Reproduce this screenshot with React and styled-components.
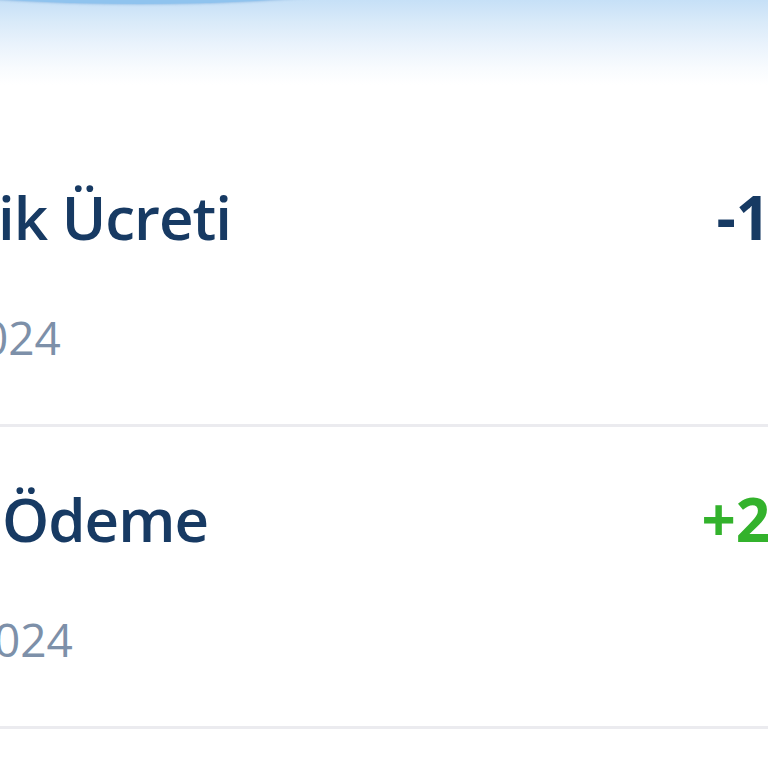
import React from 'react';
import styled, { createGlobalStyle } from 'styled-components';

const GlobalStyle = createGlobalStyle`
  html, body {
    margin: 0;
    padding: 0;
    background: #ffffff;
    overflow: hidden;
  }
  body {
    font-family: "Open Sans", "Noto Sans", sans-serif;
  }
`;

const Screen = styled.div`
  width: 770px;
  height: 768px;
  display: flex;
  flex-direction: column;
`;

const Header = styled.div`
  position: relative;
  height: 125px;
  flex-shrink: 0;
  overflow: hidden;
  background: linear-gradient(
    to bottom,
    #c6e0f7 0px,
    #d9eaf9 22px,
    #eaf3fc 45px,
    #f8fbfe 68px,
    #ffffff 85px
  );
`;

const Bubble = styled.div`
  position: absolute;
  left: -160px;
  top: -76px;
  width: 600px;
  height: 80px;
  border-radius: 50%;
  background: #8fc3ee;
  box-shadow: 0 1px 2px rgba(90, 150, 210, 0.35);
`;

const List = styled.div`
  display: flex;
  flex-direction: column;
`;

const Row = styled.div`
  display: flex;
  justify-content: space-between;
  align-items: flex-start;
  padding: 56px 0 59px;
  border-bottom: 3px solid #ebebef;
`;

const Info = styled.div`
  display: flex;
  flex-direction: column;
  gap: 56px;
  min-width: 0;
`;

const Title = styled.div`
  margin-left: ${({ $shift }) => $shift}px;
  font-size: 60px;
  line-height: 72px;
  font-weight: 600;
  letter-spacing: -1px;
  color: #173a63;
  white-space: nowrap;
`;

const DateText = styled.div`
  margin-left: ${({ $shift }) => $shift}px;
  font-size: 46px;
  line-height: 56px;
  font-weight: 500;
  color: #7d90a9;
  white-space: nowrap;
`;

const Amount = styled.div`
  font-size: 60px;
  line-height: 72px;
  font-weight: 700;
  color: ${({ $positive }) => ($positive ? '#33b22c' : '#173a63')};
  white-space: nowrap;
`;

const transactions = [
  { title: 'ik Ücreti', titleShift: -2, date: '024', dateShift: -18, amount: '-1', positive: false },
  { title: 'Ödeme', titleShift: 2, date: '024', dateShift: -6, amount: '+2', positive: true },
];

const App = () => {
  return (
    <Screen>
      <GlobalStyle />
      <Header>
        <Bubble />
      </Header>
      <List>
        {transactions.map((t, index) => (
          <Row key={index}>
            <Info>
              <Title $shift={t.titleShift}>{t.title}</Title>
              <DateText $shift={t.dateShift}>{t.date}</DateText>
            </Info>
            <Amount $positive={t.positive}>{t.amount}</Amount>
          </Row>
        ))}
      </List>
    </Screen>
  );
};

export default App;
